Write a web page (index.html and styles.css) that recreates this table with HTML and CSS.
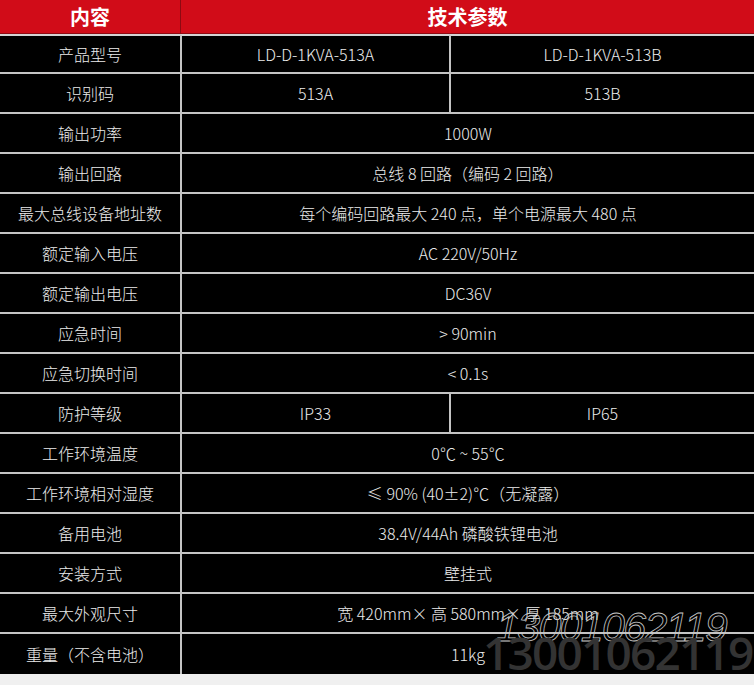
FILE: index.html
```html
<!DOCTYPE html>
<html lang="zh-CN">
<head>
<meta charset="utf-8">
<title>技术参数</title>
<link rel="stylesheet" href="styles.css">
</head>
<body>
<div class="wrap">
<table class="spec">
  <colgroup>
    <col class="c1"><col class="c2"><col class="c3">
  </colgroup>
  <thead>
    <tr><th class="h1">内容</th><th class="h2" colspan="2">技术参数</th></tr>
  </thead>
  <tbody>
    <tr><td>产品型号</td><td class="v">LD-D-1KVA-513A</td><td class="v">LD-D-1KVA-513B</td></tr>
    <tr><td>识别码</td><td class="v">513A</td><td class="v">513B</td></tr>
    <tr><td>输出功率</td><td class="v" colspan="2">1000W</td></tr>
    <tr><td>输出回路</td><td class="v" colspan="2">总线 8 回路（编码 2 回路）</td></tr>
    <tr><td>最大总线设备地址数</td><td class="v" colspan="2">每个编码回路最大 240 点，单个电源最大 480 点</td></tr>
    <tr><td>额定输入电压</td><td class="v" colspan="2">AC 220V/50Hz</td></tr>
    <tr><td>额定输出电压</td><td class="v" colspan="2">DC36V</td></tr>
    <tr><td>应急时间</td><td class="v" colspan="2">&gt; 90min</td></tr>
    <tr><td>应急切换时间</td><td class="v" colspan="2">&lt; 0.1s</td></tr>
    <tr><td>防护等级</td><td class="v">IP33</td><td class="v">IP65</td></tr>
    <tr><td>工作环境温度</td><td class="v" colspan="2">0℃ ~ 55℃</td></tr>
    <tr><td>工作环境相对湿度</td><td class="v" colspan="2">≤ 90% (40±2)℃（无凝露）</td></tr>
    <tr><td>备用电池</td><td class="v" colspan="2">38.4V/44Ah 磷酸铁锂电池</td></tr>
    <tr><td>安装方式</td><td class="v" colspan="2">壁挂式</td></tr>
    <tr><td>最大外观尺寸</td><td class="v" colspan="2">宽 420mm× 高 580mm× 厚 185mm</td></tr>
    <tr class="last"><td>重量（不含电池）</td><td class="v" colspan="2">11kg</td></tr>
  </tbody>
</table>
<div class="wm-outline">13001062119</div>
<div class="wm-solid">13001062119</div>
</div>
</body>
</html>
```
FILE: styles.css
```css
html, body {
  margin: 0;
  padding: 0;
  background: #f0f0f0;
}
.wrap {
  position: relative;
  width: 754px;
  height: 685px;
  overflow: hidden;
}
.spec {
  width: 754px;
  border-collapse: separate;
  border-spacing: 0;
  table-layout: fixed;
  font-family: "Noto Sans CJK SC", "Noto Sans", sans-serif;
  font-weight: 300;
  color: #ececec;
}
.c1 { width: 180px; }
.c2 { width: 269px; }
.c3 { width: 305px; }
.spec th {
  background: #d10c18;
  color: #ffffff;
  font-size: 20px;
  font-weight: 700;
  height: 33px;
  padding: 0;
  border-bottom: 1px solid #8e0a12;
  line-height: 33px;
}
.spec th.h2 {
  border-left: 1px solid #8e0a12;
}
.spec tbody tr:first-child td {
  border-top: 2px solid #d4d4d4;
  height: 36px;
}
.spec td {
  background: #000000;
  font-size: 16px;
  text-align: center;
  padding: 0;
  height: 38px;
  line-height: 20px;
  border-bottom: 2px solid #c4c4c4;
  white-space: nowrap;
}
.spec td.v {
  border-left: 2px solid #c4c4c4;
}
.spec tr.last td {
  border-bottom: none;
  height: 40px;
}
.wm-outline {
  position: absolute;
  left: 496px;
  top: 607px;
  font-family: "Liberation Sans", sans-serif;
  font-style: italic;
  font-size: 41px;
  line-height: 41px;
  letter-spacing: -1.6px;
  color: transparent;
  -webkit-text-stroke: 0.8px #c8c8c8;
  white-space: nowrap;
}
.wm-solid {
  position: absolute;
  left: 483px;
  top: 629px;
  font-family: "Open Sans", sans-serif;
  font-weight: 600;
  font-size: 46px;
  line-height: 46px;
  letter-spacing: -1.8px;
  color: #333333;
  white-space: nowrap;
}
```
